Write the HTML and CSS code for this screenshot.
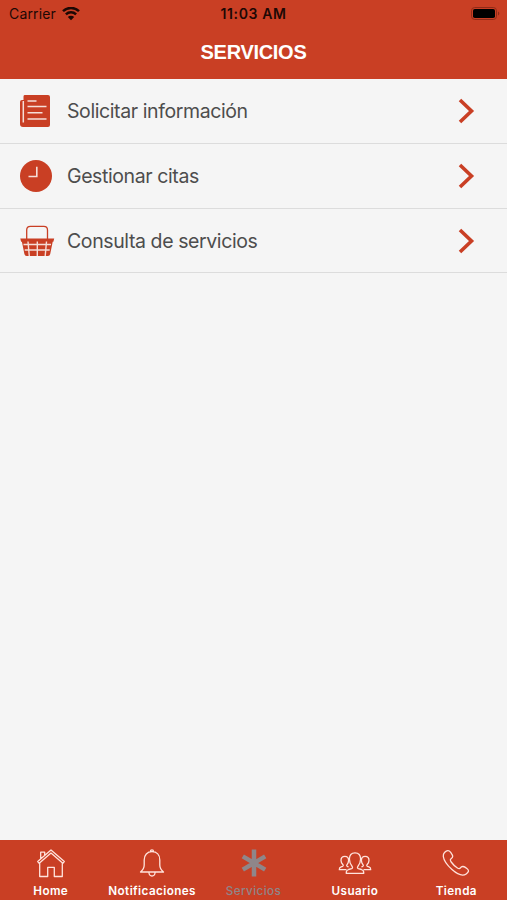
FILE: index.html
```html
<!DOCTYPE html>
<html lang="es">
<head>
    <meta charset="UTF-8">
    <meta name="viewport" content="width=device-width, initial-scale=1.0">
    <title>Servicios</title>
    <link rel="stylesheet" href="styles.css">
</head>
<body>
    <!-- Cabecera -->
    <header class="header">
        <div class="status-bar">
            <div class="carrier">
                <span>Carrier</span>
                <svg class="wifi" width="18" height="14" viewBox="0 0 18 14">
                    <path d="M1 4.2a11.500 11.500 0 0 1 16 0M3.900 7.400a7.300 7.300 0 0 1 10.200 0" fill="none" stroke="currentColor" stroke-width="2.500"/>
                    <path d="M5.800 10a4.600 4.600 0 0 1 6.400 0L9 13.300z" fill="currentColor"/>
                </svg>
            </div>
            <span class="clock">11:03 AM</span>
            <svg class="battery" width="29" height="13" viewBox="0 0 29 13">
                <rect x=".5" y=".5" width="25" height="12" rx="3.2" fill="none" stroke="#8f2b18"/>
                <rect x="2" y="2" width="22" height="9" rx="1.8" fill="#000"/>
                <path d="M27 4.5c1.8.6 1.8 3.4 0 4z" fill="#8f2b18"/>
            </svg>
        </div>
        <h1>SERVICIOS</h1>
    </header>

    <!-- Lista de servicios -->
    <main class="service-list">
        <a class="service-item" href="#">
            <svg class="icon" width="36" height="36" viewBox="0 0 36 36">
                <path d="M5.500 2H29q2 0 2 2v28q0 2-2 2H4q-3 0-3-3V9q0-2 2-2h1.500V3.500Q4.500 2 5.500 2z" fill="#c93f24"/>
                <path d="M4.300 8v21.500M8.500 8h9M8.500 13.500h19M8.500 19.800h15M8.500 26h19" fill="none" stroke="#f5ded8" stroke-width="1.500"/>
            </svg>
            <span class="label">Solicitar información</span>
            <svg class="arrow" width="17" height="26" viewBox="0 0 17 26"><path d="M2 2L13.500 13 2 24"/></svg>
        </a>
        <a class="service-item" href="#">
            <svg class="icon" width="36" height="36" viewBox="0 0 36 36">
                <circle cx="17" cy="18" r="16" fill="#c93f24"/>
                <path d="M17.800 8.700v9.800H9.500" fill="none" stroke="#f5ded8" stroke-width="1.600"/>
            </svg>
            <span class="label">Gestionar citas</span>
            <svg class="arrow" width="17" height="26" viewBox="0 0 17 26"><path d="M2 2L13.500 13 2 24"/></svg>
        </a>
        <a class="service-item" href="#">
            <svg class="icon" width="36" height="36" viewBox="0 0 36 36">
                <path d="M7.700 16V7q0-3.700 3.700-3.700h13.400q3.700 0 3.700 3.700v9" fill="none" stroke="#c93f24" stroke-width="1.300"/>
                <path d="M1.300 15.500H35.200l-.8 3.300h-.7L31.200 31q-.3 2-2.300 2H7.700q-2 0-2.300-2L2.900 18.800h-.8z" fill="#c93f24"/>
                <path d="M4.500 21.500h27.500M5.700 27h25M9 18.500l1.300 14.500M18.300 18.500v14.500M27.500 18.500L26.200 33" fill="none" stroke="#f5ded8" stroke-width="1.400"/>
            </svg>
            <span class="label">Consulta de servicios</span>
            <svg class="arrow" width="17" height="26" viewBox="0 0 17 26"><path d="M2 2L13.500 13 2 24"/></svg>
        </a>
    </main>

    <!-- Menú inferior -->
    <nav class="tab-bar">
        <a class="tab" href="#">
            <svg width="34" height="32" viewBox="0 0 34 32">
                <path d="M5.700 15.500V29.500h8V20.300h6.600v9.200h8V15.500M3.700 14.600L17 3l13.300 11.600-1.500 1.700L17 6.100 5.200 16.300zM6.700 11.800V5.200h4v3.300"/>
            </svg>
            <span>Home</span>
        </a>
        <a class="tab" href="#">
            <svg width="34" height="32" viewBox="0 0 34 32">
                <path d="M5.500 25q3.700-3 3.700-7v-5c0-5 3-8.300 7.800-8.300s7.800 3.300 7.800 8.300v5q0 4 3.700 7zM15.500 4.500q0-1.700 1.500-1.700t1.500 1.700M13.900 25.500q.3 3.500 3.100 3.500t3.100-3.500"/>
            </svg>
            <span>Notificaciones</span>
        </a>
        <a class="tab active" href="#">
            <svg width="34" height="32" viewBox="0 0 34 32">
                <path class="asterisk" d="M17 2.500v27M5.800 9.400l22.400 13.200M5.800 22.600L28.200 9.400"/>
            </svg>
            <span>Servicios</span>
        </a>
        <a class="tab" href="#">
            <svg width="34" height="32" viewBox="0 0 34 32">
                <path d="M8.300 26.300q-.4-3 2.300-3.800l3-.8q1.400-.6.700-2c-2-2.300-2.900-4.700-2.900-7.600 0-4 2-6.300 5.600-6.300s5.600 2.300 5.600 6.300c0 2.900-.9 5.300-2.900 7.600q-.7 1.400.7 2l3 .8q2.700.8 2.300 3.800z"/>
                <path d="M8.500 22.700H1.300q-.2-2.200 1.800-2.900l1.600-.5q.9-.5.300-1.500C3.600 16.200 3 15 3 13.400c0-2.500 1.400-4 3.900-4 2.300 0 3.700 1.500 3.700 4 0 1.600-.5 2.800-1.700 4.400q-.6 1 .3 1.500l1.400.7M25.500 22.700h7.200q.2-2.200-1.800-2.900l-1.600-.5q-.9-.5-.3-1.500c1.400-1.600 2-2.800 2-4.400 0-2.500-1.400-4-3.900-4-2.300 0-3.700 1.500-3.700 4 0 1.600.5 2.800 1.700 4.400q.6 1-.3 1.500l-1.400.7"/>
            </svg>
            <span>Usuario</span>
        </a>
        <a class="tab" href="#">
            <svg width="34" height="32" viewBox="0 0 34 32">
                <path d="M5.500 5.500q3.500-3.700 6.200-.2c2.600 3.600 2.600 5 .4 6.500q-1.500 1 .1 3.200c2 2.800 3.600 4.400 6.200 6q2.100 1.300 3-.1c1.400-2.200 3.500-1.700 6.500.5 2.500 1.900 2 3.500-.7 5.500-3.200 2.300-8.500.7-14.200-4.400C7.500 17.600 4.800 13.500 4.300 9.500q-.2-2.600 1.200-4z"/>
            </svg>
            <span>Tienda</span>
        </a>
    </nav>
</body>
</html>
```
FILE: styles.css
```css
:root {
    --red: #c93f24;
    --page-bg: #f5f5f5;
    --text: #4d4d4d;
    --line: #dcdcdc;
    --active: #8f8689;
}

* {
    box-sizing: border-box;
}

body {
    margin: 0;
    height: 100vh;
    display: flex;
    flex-direction: column;
    background-color: var(--page-bg);
    color: var(--text);
    font-family: 'Inter', sans-serif;
}

a {
    color: inherit;
    text-decoration: none;
}

/* Cabecera */
.header {
    height: 79px;
    background-color: var(--red);
}

.status-bar {
    height: 27px;
    padding: 0 7px 0 9px;
    display: grid;
    grid-template-columns: 1fr auto 1fr;
    align-items: center;
    color: #1d0804;
    font-size: 14px;
}

.carrier {
    display: flex;
    align-items: center;
    gap: 6px;
    letter-spacing: 0.15px;
}

.clock {
    margin-right: 2px;
    font-weight: 600;
    letter-spacing: 0.6px;
}

.battery {
    justify-self: end;
}

.header h1 {
    margin: 0;
    color: #fff;
    font-family: 'Liberation Sans', sans-serif;
    font-size: 20px;
    font-weight: bold;
    line-height: 50px;
    letter-spacing: -0.3px;
    text-align: center;
}

/* Lista */
.service-list {
    flex-grow: 1;
}

.service-item {
    height: 65px;
    padding: 0 32px 0 19px;
    display: flex;
    align-items: center;
    border-bottom: 1px solid var(--line);
}

.service-item:last-child {
    height: 64px;
}

.service-item .label {
    flex-grow: 1;
    margin-left: 12px;
    font-size: 19.5px;
    letter-spacing: -0.4px;
}

.arrow {
    fill: none;
    stroke: var(--red);
    stroke-width: 3.6;
}

/* Menú inferior */
.tab-bar {
    height: 60px;
    display: flex;
    background-color: var(--red);
    color: #fff;
}

.tab {
    flex: 1;
    padding-top: 7px;
    display: flex;
    flex-direction: column;
    align-items: center;
    font-size: 11.7px;
    font-weight: 600;
    line-height: 14px;
    letter-spacing: 0.4px;
}

.tab svg {
    margin-bottom: 5px;
    fill: none;
    stroke: #ffe3dc;
    stroke-width: 1.3;
    stroke-linejoin: round;
}

.tab.active {
    color: var(--active);
    font-weight: 500;
}

.tab .asterisk {
    stroke: var(--active);
    stroke-width: 4.5;
}
```
